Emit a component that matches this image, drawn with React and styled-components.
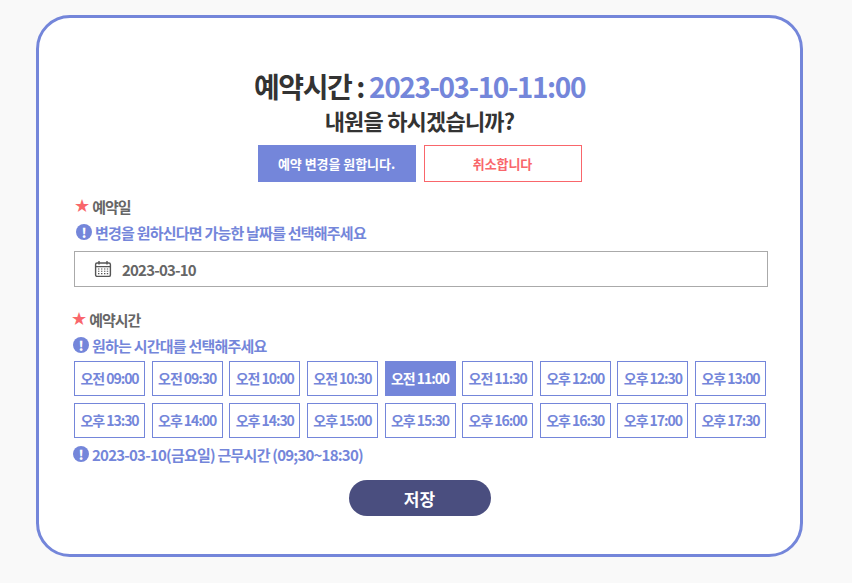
import React from 'react';
import styled, { createGlobalStyle } from 'styled-components';

const GlobalStyle = createGlobalStyle`
  html, body {
    margin: 0;
    padding: 0;
    background: #f9f9f9;
    font-family: 'Noto Sans CJK KR', 'Noto Sans', sans-serif;
  }
`;

const Page = styled.div`
  width: 852px;
  height: 583px;
  box-sizing: border-box;
  padding: 15px 0 0 36px;
  overflow: hidden;
`;

const Card = styled.main`
  width: 767px;
  height: 542px;
  box-sizing: border-box;
  padding: 50px 35px 0 35px;
  background: #fff;
  border: 3px solid #7486da;
  border-radius: 34px;
`;

const Title = styled.h1`
  margin: 0;
  text-align: center;
  font-size: 28px;
  line-height: 37px;
  font-weight: 700;
  letter-spacing: -1.4px;
  color: #333;
`;

const TitleDate = styled.span`
  color: #7486da;
`;

const SubTitle = styled.h2`
  margin: 0;
  text-align: center;
  font-size: 22px;
  line-height: 30px;
  font-weight: 700;
  letter-spacing: -0.8px;
  color: #333;
`;

const ActionRow = styled.div`
  display: flex;
  justify-content: center;
  gap: 8px;
  margin-top: 10px;
`;

const ActionButton = styled.button`
  width: 158px;
  height: 37px;
  box-sizing: border-box;
  padding: 0;
  border: 1px solid ${(p) => (p.$primary ? '#7486da' : '#f9666b')};
  background: ${(p) => (p.$primary ? '#7486da' : '#fff')};
  color: ${(p) => (p.$primary ? '#fff' : '#f9666b')};
  font-family: inherit;
  font-size: 13px;
  font-weight: 700;
  letter-spacing: -0.05px;
`;

const Section = styled.section`
  margin-top: ${(p) => p.$top}px;
`;

const Label = styled.div`
  display: flex;
  align-items: center;
  gap: 3px;
  height: 26px;
  margin-left: ${(p) => p.$indent}px;
  font-size: 15px;
  font-weight: 700;
  letter-spacing: -1px;
  color: #666;
`;

const Star = styled.span`
  color: #f9666b;
  font-family: 'DejaVu Sans', sans-serif;
  font-size: 18px;
  line-height: 1;
`;

const Info = styled.div`
  display: flex;
  align-items: center;
  gap: 3px;
  height: 26px;
  margin-top: ${(p) => p.$top || 0}px;
  margin-left: ${(p) => p.$indent}px;
  font-size: 15px;
  font-weight: 700;
  letter-spacing: -0.78px;
  color: #7486da;
`;

const InfoBadge = styled.span`
  display: flex;
  align-items: center;
  justify-content: center;
  width: 16px;
  height: 16px;
  border-radius: 50%;
  background: #7486da;
  color: #fff;
  font-size: 13px;
  font-weight: 900;
  letter-spacing: 0;
  flex: none;
`;

const DateField = styled.div`
  display: flex;
  align-items: center;
  gap: 10px;
  width: 694px;
  height: 36px;
  box-sizing: border-box;
  margin-top: 6px;
  padding-left: 19px;
  border: 1px solid #aaa;
  font-size: 15px;
  font-weight: 700;
  letter-spacing: -0.8px;
  color: #666;
`;

const TimeGrid = styled.div`
  display: grid;
  grid-template-columns: repeat(9, 71px);
  grid-auto-rows: 35px;
  column-gap: 6.63px;
  row-gap: 7px;
  margin-top: 3px;
`;

const TimeButton = styled.button`
  box-sizing: border-box;
  padding: 0 0 1px;
  border: 1px solid #7486da;
  background: ${(p) => (p.$active ? '#7486da' : '#fff')};
  color: ${(p) => (p.$active ? '#fff' : '#7486da')};
  font-family: inherit;
  font-size: 14px;
  font-weight: 700;
  letter-spacing: -1.05px;
`;

const Footer = styled.div`
  display: flex;
  justify-content: center;
  margin-top: 13px;
`;

const SaveButton = styled.button`
  width: 142px;
  height: 36px;
  padding: 0;
  border: 0;
  border-radius: 18px;
  background: #4a4e7f;
  color: #fff;
  font-family: inherit;
  font-size: 17px;
  font-weight: 700;
`;

const CalendarIcon = () => (
  <svg width="18" height="18" viewBox="0 0 18 18" fill="none" stroke="#555" strokeWidth="1.4">
    <rect x="1.6" y="3" width="14.8" height="13.4" rx="1.5" />
    <path d="M1.6 6.6h14.8M5 1v3.4M13 1v3.4" />
    <path
      d="M4 9h1.4M7 9h1.4M10 9h1.4M12.8 9h1.4M4 11.2h1.4M7 11.2h1.4M10 11.2h1.4M12.8 11.2h1.4M4 13.6h1.4M7 13.6h1.4M10 13.6h1.4M12.8 13.6h1.4"
      strokeWidth="1.1"
    />
  </svg>
);

const times = [
  '오전 09:00', '오전 09:30', '오전 10:00', '오전 10:30', '오전 11:00', '오전 11:30', '오후 12:00', '오후 12:30', '오후 13:00',
  '오후 13:30', '오후 14:00', '오후 14:30', '오후 15:00', '오후 15:30', '오후 16:00', '오후 16:30', '오후 17:00', '오후 17:30',
];

const App = () => {
  return (
    <Page>
      <GlobalStyle />
      <Card>
        <Title>
          예약시간 : <TitleDate>2023-03-10-11:00</TitleDate>
        </Title>
        <SubTitle>내원을 하시겠습니까?</SubTitle>
        <ActionRow>
          <ActionButton $primary>예약 변경을 원합니다.</ActionButton>
          <ActionButton>취소합니다</ActionButton>
        </ActionRow>

        <Section $top={11}>
          <Label $indent={0}>
            <Star>★</Star>예약일
          </Label>
          <Info $indent={2}>
            <InfoBadge>!</InfoBadge>변경을 원하신다면 가능한 날짜를 선택해주세요
          </Info>
          <DateField>
            <CalendarIcon />
            2023-03-10
          </DateField>
        </Section>

        <Section $top={19}>
          <Label $indent={-3}>
            <Star>★</Star>예약시간
          </Label>
          <Info $indent={-1}>
            <InfoBadge>!</InfoBadge>원하는 시간대를 선택해주세요
          </Info>
          <TimeGrid>
            {times.map((time) => (
              <TimeButton key={time} $active={time === '오전 11:00'}>
                {time}
              </TimeButton>
            ))}
          </TimeGrid>
          <Info $indent={-1} $top={3}>
            <InfoBadge>!</InfoBadge>2023-03-10(금요일) 근무시간 (09;30~18:30)
          </Info>
        </Section>

        <Footer>
          <SaveButton>저장</SaveButton>
        </Footer>
      </Card>
    </Page>
  );
};

export default App;
